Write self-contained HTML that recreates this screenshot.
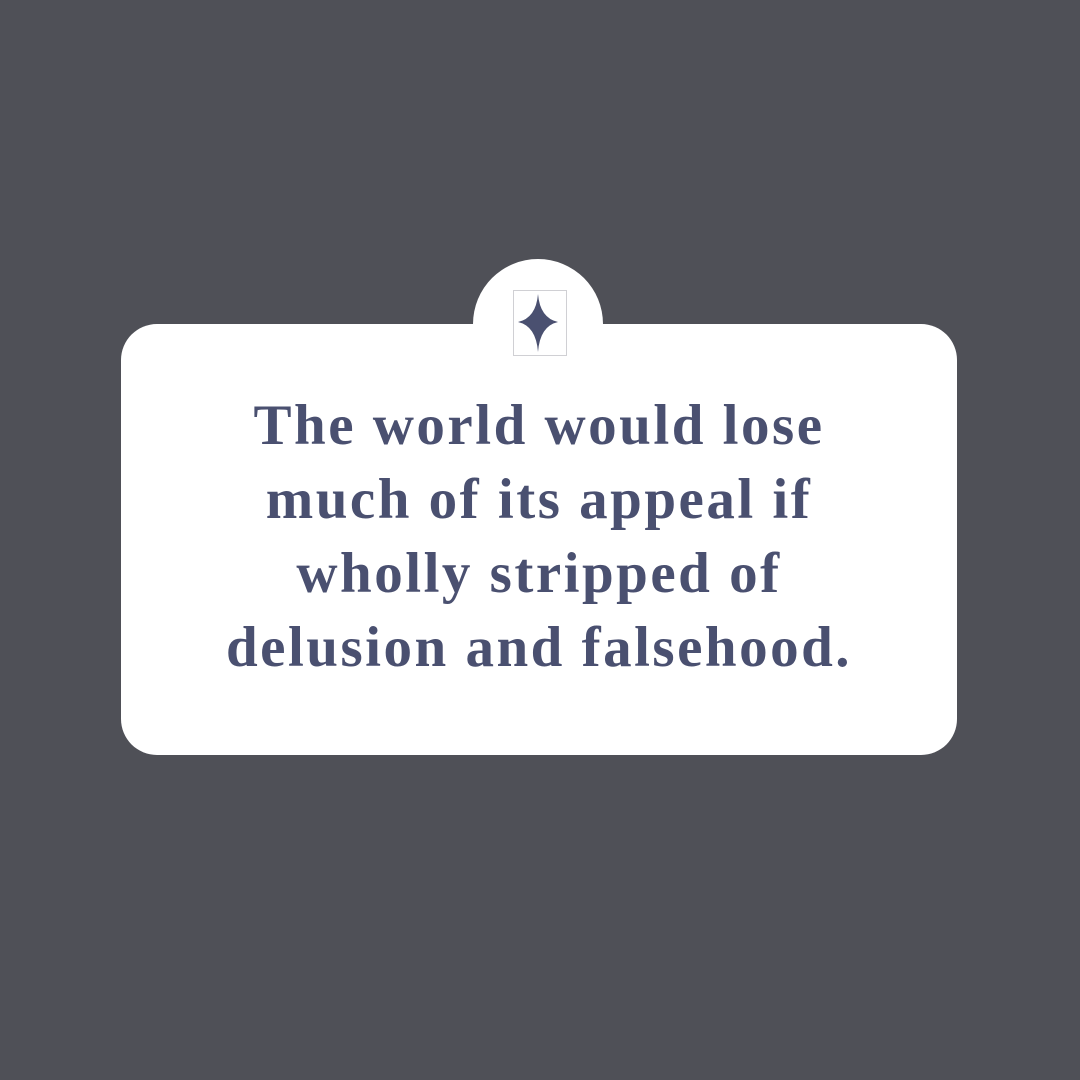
<!DOCTYPE html>
<html><head><style>
body{margin:0;width:1080px;height:1080px;background:#4f5057;position:relative;overflow:hidden}
.card{position:absolute;left:121px;top:324px;width:836px;height:431px;background:#fff;border-radius:36px}
.circ{position:absolute;left:473px;top:259px;width:130px;height:130px;border-radius:50%;background:#fff}
.box{position:absolute;left:513px;top:290px;width:52px;height:64px;border:1px solid #d0d0d4}
.txt{position:absolute;left:121px;width:836px;top:389px;text-align:center;font-family:"Liberation Serif",serif;font-weight:bold;font-size:57px;line-height:74px;color:#4a5070;letter-spacing:2.5px}
</style></head><body>
<div class="card"></div><div class="circ"></div><div class="box"></div>
<svg style="position:absolute;left:0;top:0" width="1080" height="1080"><path d="M538 294 Q540 318 558 322 Q540 326 538 352 Q536 326 518 322 Q536 318 538 294Z" fill="#4a5070"/></svg>
<div class="txt">The world would lose<br>much of its appeal if<br>wholly stripped of<br>delusion and falsehood.</div>
</body></html>
